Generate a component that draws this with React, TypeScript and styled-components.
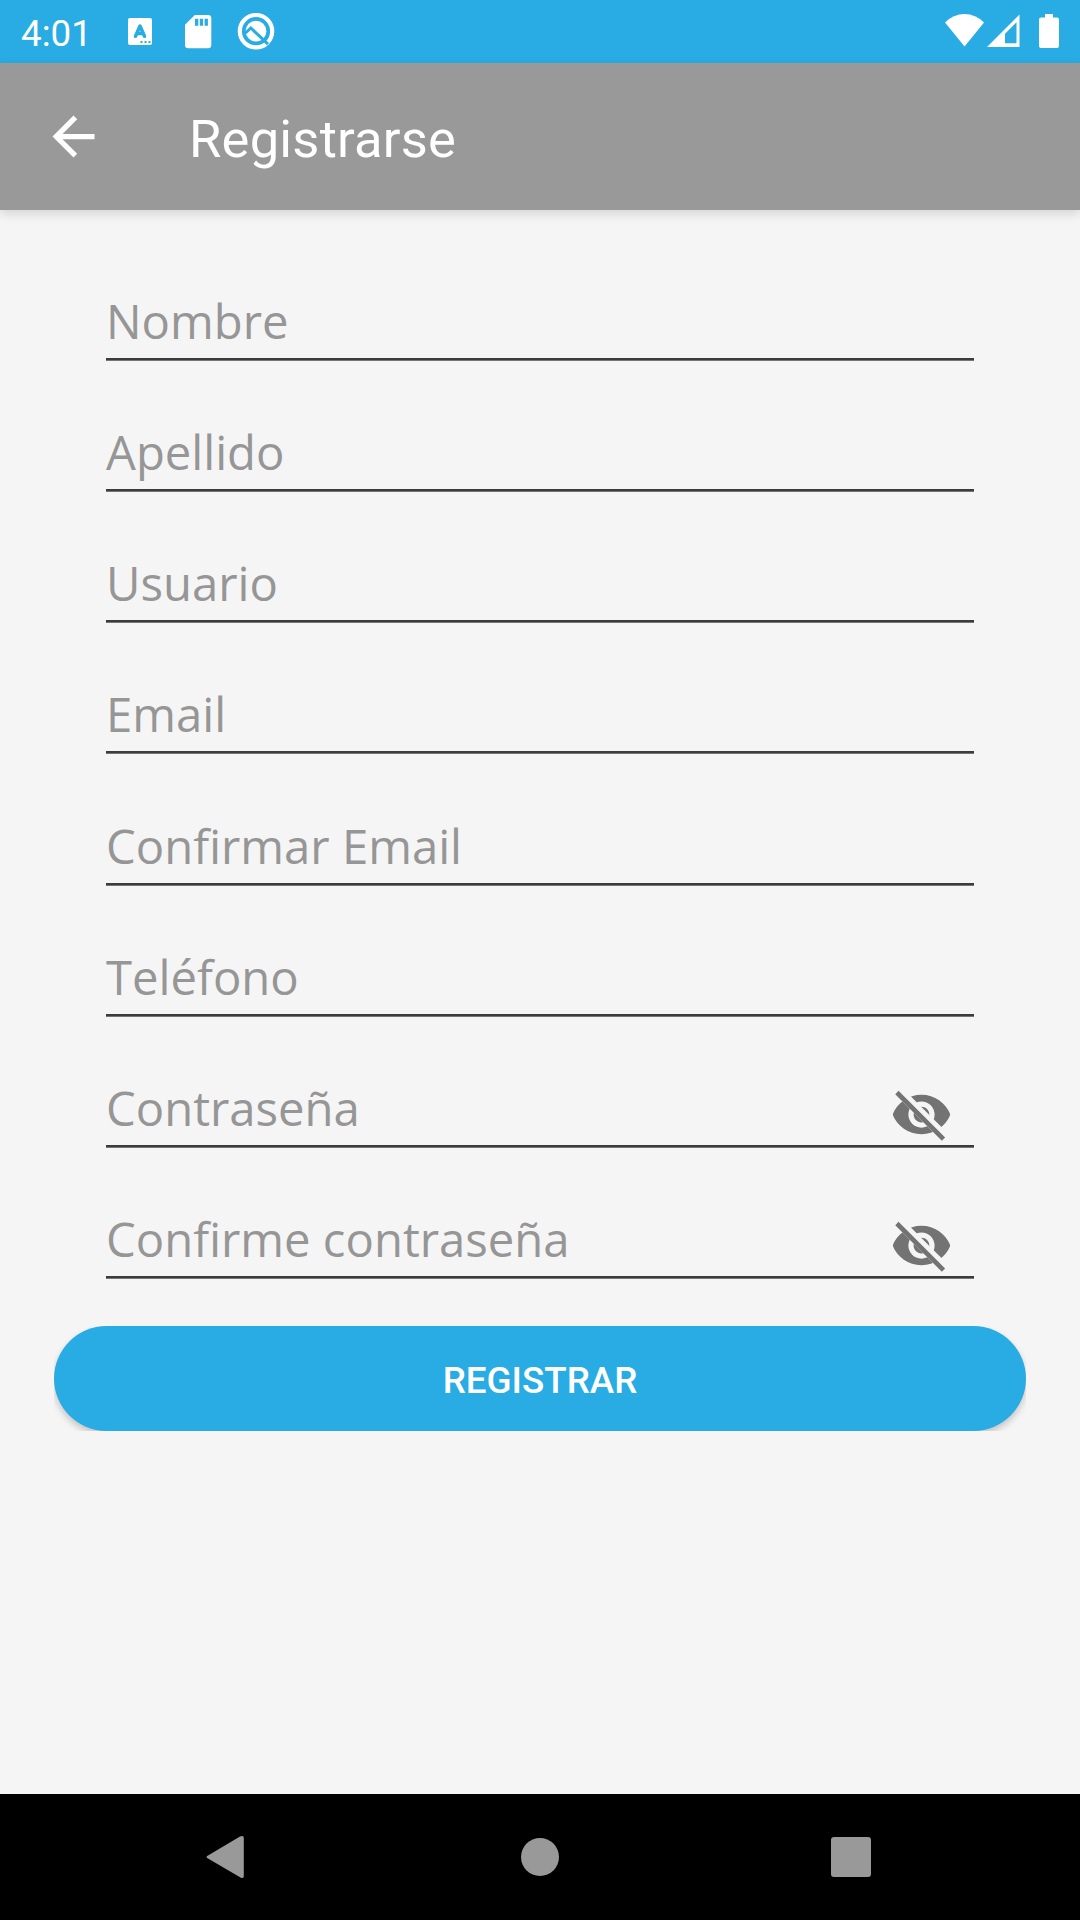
import React from "react";
import styled, { createGlobalStyle } from "styled-components";

const Global = createGlobalStyle`
  * { box-sizing: border-box; }
  body { margin: 0; background: #f5f5f5; }
`;

const Screen = styled.div`
  width: 1080px;
  height: 1920px;
  display: flex;
  flex-direction: column;
  overflow: hidden;
  background: #f5f5f5;
  font-family: Roboto, "Liberation Sans", sans-serif;
`;

const StatusBar = styled.header`
  flex: none;
  height: 63px;
  padding: 0 21px;
  display: flex;
  justify-content: space-between;
  background: #29abe3;
  color: #fff;
`;

const StatusGroup = styled.div`
  display: flex;
  align-items: flex-start;
`;

const Clock = styled.span`
  width: 107px;
  padding-top: 12px;
  font-size: 36.75px;
  line-height: 43px;
`;

const StatusIcon = styled.svg<{ $gap?: number }>`
  flex: none;
  display: block;
  margin-left: ${(p) => p.$gap ?? 0}px;
`;

const AppBar = styled.div`
  flex: none;
  height: 147px;
  padding-left: 42px;
  display: flex;
  align-items: center;
  gap: 84px;
  background: #999;
  box-shadow: 0 4px 10px rgba(0, 0, 0, 0.13);
  color: #fff;
`;

const BackButton = styled.button`
  width: 63px;
  height: 63px;
  padding: 0;
  border: 0;
  background: none;
  color: inherit;
`;

const Icon = styled.svg`
  display: block;
  width: 63px;
  height: 63px;
`;

const Title = styled.h1`
  margin: 0;
  padding-top: 5px;
  font-size: 52.5px;
  font-weight: 400;
  line-height: 62px;
  letter-spacing: 0.22px;
`;

const Form = styled.form`
  flex: 1;
  padding: 20px 54px 0;
  display: flex;
  flex-direction: column;
`;

const Fields = styled.div`
  height: 1096px;
  padding: 0 52px;
`;

const Field = styled.label`
  height: 131px;
  display: flex;
  align-items: flex-end;
  justify-content: space-between;

  &:nth-child(5) {
    height: 132px;
  }
`;

const FieldLine = styled.span`
  flex: 1;
  height: 90px;
  display: flex;
  justify-content: space-between;
  border-bottom: 1px solid #757575;
  box-shadow: inset 0 -2px 0 #3c3c3c;
`;

const Hint = styled.span`
  padding-top: 17px;
  color: #969696;
  font-family: "Open Sans", "Noto Sans", sans-serif;
  font-size: 47.25px;
  line-height: 65px;
  white-space: nowrap;
`;

const Toggle = styled.button`
  width: 63px;
  height: 63px;
  margin: 25px 21px 0 0;
  padding: 0;
  border: 0;
  background: none;
  color: #737373;
`;

const ButtonFrame = styled.div`
  height: 105px;
  overflow: hidden;
`;

const Submit = styled.button`
  width: 100%;
  height: 105px;
  padding: 4px 0 0;
  border: 0;
  border-radius: 53px;
  background: #29abe3;
  box-shadow: 0 4px 7px rgba(0, 0, 0, 0.2);
  color: #fff;
  font-family: Roboto, "Liberation Sans", sans-serif;
  font-size: 36.75px;
  font-weight: 500;
  line-height: 43px;
`;

const NavBar = styled.nav`
  flex: none;
  height: 126px;
  padding: 0 206px;
  display: flex;
  align-items: center;
  justify-content: space-between;
  background: #000;
  color: #999;
`;

const NavIcon = styled.svg`
  display: block;
  width: 42px;
  height: 44px;
  overflow: visible;
`;

const FIELDS: { label: string; secret?: boolean }[] = [
  { label: "Nombre" },
  { label: "Apellido" },
  { label: "Usuario" },
  { label: "Email" },
  { label: "Confirmar Email" },
  { label: "Teléfono" },
  { label: "Contraseña", secret: true },
  { label: "Confirme contraseña", secret: true },
];

const EyeOff = ({ id }: { id: string }) => (
  <Icon viewBox="0 0 24 24" fill="currentColor">
    <clipPath id={id}>
      <path d="M2 4.27 19.73 22l2.54-2.54L4.54 1.73V1H23v22H1V4.27z" />
    </clipPath>
    <path
      clipPath={`url(#${id})`}
      d="M12 4.5C7 4.5 2.73 7.61 1 12c1.73 4.39 6 7.5 11 7.5s9.27-3.11 11-7.5c-1.73-4.39-6-7.5-11-7.5zM12 17c-2.76 0-5-2.24-5-5s2.24-5 5-5 5 2.24 5 5-2.24 5-5 5zm0-8c-1.66 0-3 1.34-3 3s1.34 3 3 3 3-1.34 3-3-1.34-3-3-3z"
    />
    <path d="M3.27 4.27 19.74 20.74" stroke="currentColor" strokeWidth="1.8" strokeLinecap="square" />
  </Icon>
);

export default function App() {
  return (
    <Screen>
      <Global />
      <StatusBar>
        <StatusGroup>
          <Clock>4:01</Clock>
          <StatusIcon width="24" height="63" viewBox="0 0 24 63">
            <rect y="18" width="24" height="27" rx="2" fill="#fff" />
            <path d="M7.5 36.3 12 26 16.5 36.3M9 33.4h6" fill="none" stroke="#29abe3" strokeWidth="3.5" strokeLinecap="round" strokeLinejoin="round" />
            <path d="M12.5 41h2v2h-2zM16.5 41h2v2h-2zM20.5 41h2v2h-2z" fill="#29abe3" />
          </StatusIcon>
          <StatusIcon $gap={33} width="27" height="63" viewBox="0 0 27 63">
            <path d="M9.8 15H23q3.3 0 3.3 3.3V45q0 3.3-3.3 3.3H3.3Q0 48.3 0 45V24.8z" fill="#fff" />
            <path d="M10 18.8h3.3v7H10zM14.8 18.8h3.3v7h-3.3zM19.6 18.8h3.3v7h-3.3z" fill="#29abe3" />
          </StatusIcon>
          <StatusIcon $gap={25} width="38" height="63" viewBox="0 0 38 63">
            <circle cx="19" cy="31.2" r="16.2" fill="none" stroke="#fff" strokeWidth="4.2" />
            <circle cx="19" cy="31.2" r="10.4" fill="#fff" />
            <path d="M8.5 33 13.8 28 31 44.2" fill="none" stroke="#29abe3" strokeWidth="3" />
          </StatusIcon>
        </StatusGroup>
        <StatusGroup>
          <StatusIcon width="39" height="63" viewBox="0 0 39 63">
            <path d="M0 22.5Q8.5 14 19.5 14T39 22.5L19.5 46.5z" fill="#fff" />
          </StatusIcon>
          <StatusIcon $gap={3} width="33" height="63" viewBox="0 0 33 63">
            <path fillRule="evenodd" d="M0 47 32.5 14.5V47zM18 43.3H29.5V22.3L18 33.8z" fill="#fff" />
          </StatusIcon>
          <StatusIcon $gap={19} width="20" height="63" viewBox="0 0 20 63">
            <path d="M6 14h8v3.500h4q2 0 2 2V46q0 2-2 2H2q-2 0-2-2V19.500q0-2 2-2h4z" fill="#fff" />
          </StatusIcon>
        </StatusGroup>
      </StatusBar>
      <AppBar>
        <BackButton type="button" aria-label="Atrás">
          <Icon viewBox="0 0 24 24" fill="currentColor">
            <path d="M20 11H7.83l5.59-5.59L12 4l-8 8 8 8 1.41-1.41L7.83 13H20z" />
          </Icon>
        </BackButton>
        <Title>Registrarse</Title>
      </AppBar>
      <Form>
        <Fields>
          {FIELDS.map((f, i) => (
            <Field key={f.label}>
              <FieldLine>
                <Hint>{f.label}</Hint>
                {f.secret && (
                  <Toggle type="button">
                    <EyeOff id={`eye-${i}`} />
                  </Toggle>
                )}
              </FieldLine>
            </Field>
          ))}
        </Fields>
        <ButtonFrame>
          <Submit type="button">REGISTRAR</Submit>
        </ButtonFrame>
      </Form>
      <NavBar>
        <NavIcon viewBox="0 0 42 44">
          <path d="M2 20.5 34 1.5Q37.8 0 37.8 3V41Q37.8 44 34.5 42.5L2 23.5Q-1 22 2 20.5z" fill="currentColor" />
        </NavIcon>
        <NavIcon viewBox="0 0 42 44">
          <circle cx="21" cy="22" r="19" fill="currentColor" />
        </NavIcon>
        <NavIcon viewBox="0 0 42 44">
          <rect x="-1" y="2" width="40" height="40" rx="3" fill="currentColor" />
        </NavIcon>
      </NavBar>
    </Screen>
  );
}
